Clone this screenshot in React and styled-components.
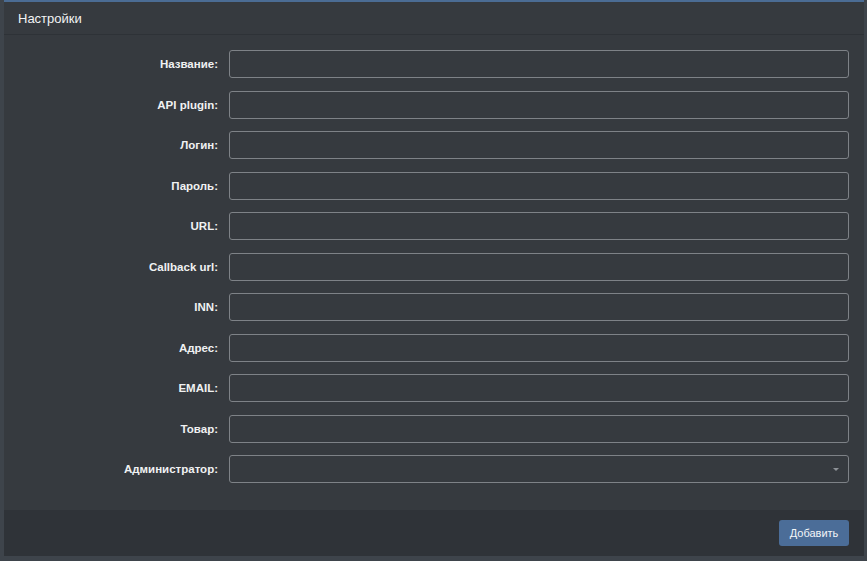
import React from 'react';
import styled, { createGlobalStyle } from 'styled-components';

const Global = createGlobalStyle`
  html, body {
    margin: 0;
    padding: 0;
    background: #3e444b;
    font-family: "Liberation Sans", Arial, sans-serif;
  }
`

const Page = styled.div`
  padding: 0 3px 5px 4px;
`

const Panel = styled.div`
  background: #363a3f;
  border-top: 2px solid #4b6c94;
  display: flex;
  flex-direction: column;
  height: 554px;
`

const Header = styled.div`
  height: 32px;
  border-bottom: 1px solid #2e3237;
  display: flex;
  align-items: center;
  padding-left: 14px;
  color: #f2f3f4;
  font-size: 13px;
`

const Body = styled.div`
  flex: 1;
  display: grid;
  grid-template-columns: 214px 1fr;
  column-gap: 11px;
  row-gap: 12.5px;
  align-content: start;
  padding: 15px 15px 0 0;
`

const Label = styled.label`
  color: #f0f1f2;
  font-weight: bold;
  font-size: 11.5px;
  text-align: right;
  align-self: center;
`

const Field = styled.div`
  position: relative;
  height: 28px;
  box-sizing: border-box;
  border: 1px solid #7e8287;
  border-radius: 3px;
  background: #363a3f;
`

const Input = styled.input`
  width: 100%;
  height: 100%;
  box-sizing: border-box;
  border: 0;
  background: transparent;
  outline: none;
  color: #fff;
  padding: 0 8px;
  font: inherit;
  font-size: 12px;
`

const Caret = styled.span`
  position: absolute;
  right: 9px;
  top: 12px;
  width: 0;
  height: 0;
  border-left: 3.5px solid transparent;
  border-right: 3.5px solid transparent;
  border-top: 3.5px solid #8d9197;
`

const Footer = styled.div`
  height: 46px;
  background: #2f3338;
  display: flex;
  align-items: center;
  justify-content: flex-end;
  padding-right: 15px;
`

const Button = styled.button`
  height: 26px;
  width: 70px;
  border: 0;
  border-radius: 3px;
  background: #4b6d98;
  color: #f4f6f8;
  font-family: inherit;
  font-size: 11px;
  padding: 0;
`

const fields = [
  'Название:',
  'API plugin:',
  'Логин:',
  'Пароль:',
  'URL:',
  'Callback url:',
  'INN:',
  'Адрес:',
  'EMAIL:',
  'Товар:',
]

function App() {
  return (
    <Page>
      <Global />
      <Panel>
        <Header>Настройки</Header>
        <Body>
          {fields.map(f => (
            <React.Fragment key={f}>
              <Label>{f}</Label>
              <Field><Input /></Field>
            </React.Fragment>
          ))}
          <Label>Администратор:</Label>
          <Field><Caret /></Field>
        </Body>
        <Footer>
          <Button>Добавить</Button>
        </Footer>
      </Panel>
    </Page>
  )
}

export default App
